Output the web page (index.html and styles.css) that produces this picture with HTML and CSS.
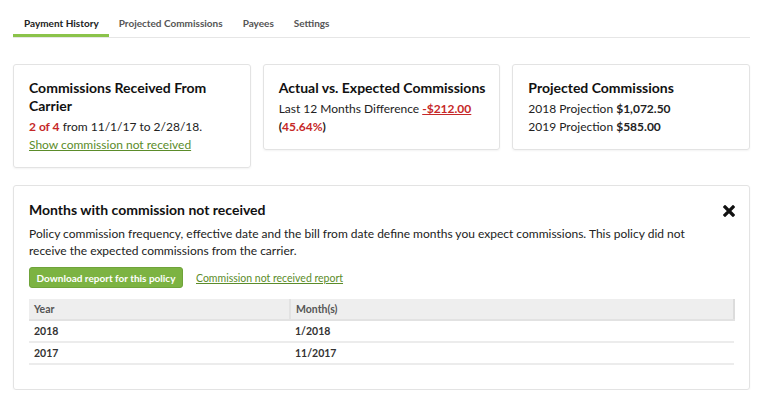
FILE: index.html
```html
<!DOCTYPE html>
<html>
<head>
<meta charset="utf-8">
<link rel="stylesheet" href="styles.css">
</head>
<body>
<div class="page">
  <nav class="tabs">
    <a class="tab active">Payment History</a>
    <a class="tab">Projected Commissions</a>
    <a class="tab">Payees</a>
    <a class="tab">Settings</a>
  </nav>
  <div class="cards">
    <div class="card tall">
      <h3 class="card-title">Commissions Received From Carrier</h3>
      <p class="line"><span class="red bold">2 of 4</span> from 11/1/17 to 2/28/18.</p>
      <p class="line"><a class="link">Show commission not received</a></p>
    </div>
    <div class="card">
      <h3 class="card-title">Actual vs. Expected Commissions</h3>
      <p class="line">Last 12 Months Difference <a class="red bold ulink">-$212.00</a> <span class="bold">(<span class="red">45.64%</span>)</span></p>
    </div>
    <div class="card">
      <h3 class="card-title">Projected Commissions</h3>
      <p class="line">2018 Projection <span class="bold">$1,072.50</span></p>
      <p class="line">2019 Projection <span class="bold">$585.00</span></p>
    </div>
  </div>
  <div class="panel">
    <div class="panel-head">
      <h3 class="card-title">Months with commission not received</h3>
      <svg class="close" width="12" height="12" viewBox="0 0 12 12" aria-label="close">
        <path d="M2 2 L10 10 M10 2 L2 10" stroke="#111" stroke-width="3.2" stroke-linecap="square"/>
      </svg>
    </div>
    <p class="desc">Policy commission frequency, effective date and the bill from date define months you expect commissions. This policy did not receive the expected commissions from the carrier.</p>
    <div class="actions">
      <button class="btn">Download report for this policy</button>
      <a class="link small">Commission not received report</a>
    </div>
    <table class="tbl">
      <thead>
        <tr><th class="c1">Year</th><th class="c2">Month(s)</th></tr>
      </thead>
      <tbody>
        <tr><td>2018</td><td>1/2018</td></tr>
        <tr><td>2017</td><td>11/2017</td></tr>
      </tbody>
    </table>
  </div>
</div>
</body>
</html>
```
FILE: styles.css
```css
* { box-sizing: border-box; }
body {
  margin: 0;
  background: #fff;
  font-family: Lato, "Open Sans", sans-serif;
  color: #222;
}
.page {
  padding: 0 17px 0 13px;
}
.tabs {
  display: flex;
  padding-top: 15px;
  border-bottom: 1px solid #e6e6e6;
  height: 38px;
}
.tab {
  font-size: 10px;
  font-weight: 700;
  color: #555;
  padding: 1px 10px 0 10px;
  height: 22px;
  line-height: 14px;
  white-space: nowrap;
}
.tab.active {
  color: #222;
  border-bottom: 3px solid #8bc34a;
  padding-left: 11px;
}
.cards {
  display: flex;
  gap: 12px;
  margin-top: 26px;
  align-items: flex-start;
}
.card {
  flex: 1;
  border: 1px solid #e3e3e3;
  border-radius: 3px;
  box-shadow: 0 1px 2px rgba(0,0,0,0.05);
  padding: 14px 10px 12px 15px;
  min-height: 86px;
}
.card.tall { min-height: 104px; }
.card-title {
  margin: 0 0 3px 0;
  font-size: 14px;
  font-weight: 700;
  line-height: 18px;
  color: #111;
}
.line {
  margin: 0;
  font-size: 12px;
  line-height: 18px;
  color: #222;
}
.red { color: #c62828; }
.bold { font-weight: 700; }
.ulink { text-decoration: underline; }
.link {
  color: #5b8c2a;
  text-decoration: underline;
}
.link.small { font-size: 10.5px; }
.panel {
  margin-top: 17px;
  border: 1px solid #e3e3e3;
  border-radius: 3px;
  box-shadow: 0 1px 2px rgba(0,0,0,0.05);
  padding: 15px 14px 24px 15px;
}
.panel-head {
  display: flex;
  justify-content: space-between;
  align-items: center;
}
.close {
  display: block;
  margin-top: -2px;
}
.desc {
  margin: 3px 0 8px 0;
  max-width: 665px;
  font-size: 12px;
  line-height: 17px;
  color: #222;
}
.actions {
  display: flex;
  align-items: center;
  gap: 13px;
}
.btn {
  font-family: inherit;
  background: #7cb342;
  border: 1px solid #6fa33a;
  color: #fff;
  font-size: 10px;
  font-weight: 700;
  border-radius: 3px;
  height: 21px;
  padding: 0;
  width: 154px;
  white-space: nowrap;
}
.tbl {
  margin-top: 11px;
  width: 100%;
  border-collapse: collapse;
  font-size: 10.5px;
}
.tbl th {
  background: #eeeeee;
  text-align: left;
  font-weight: 700;
  color: #555;
  height: 21px;
  padding: 0 5px;
  border-bottom: 2px solid #e2e2e2;
}
.tbl th.c1 { width: 261px; border-right: 2px solid #e2e2e2; }
.tbl th.c2 { border-right: 2px solid #dcdcdc; }
.tbl td {
  height: 22px;
  padding: 0 5px;
  font-weight: 700;
  color: #333;
  border-bottom: 2px solid #ececec;
}
```
